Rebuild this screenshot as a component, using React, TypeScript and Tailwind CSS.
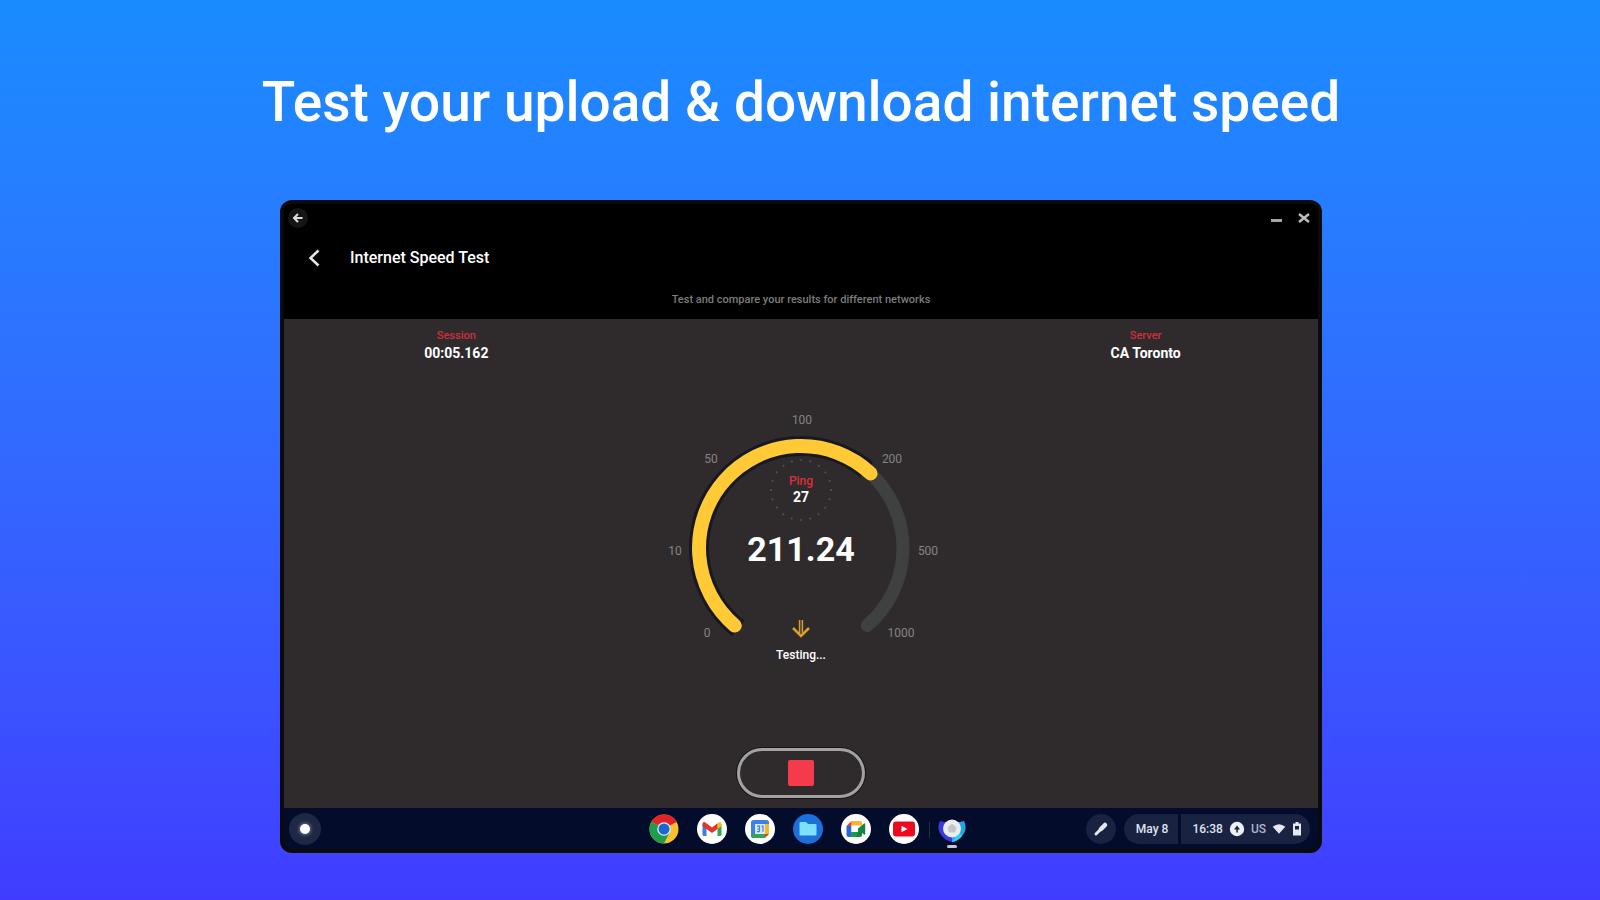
import type { ReactNode } from "react";

const CX = 160;
const CY = 160;
const R = 102;

function polar(angle: number, r: number): [number, number] {
  const a = (angle * Math.PI) / 180;
  return [CX + r * Math.sin(a), CY - r * Math.cos(a)];
}

function arc(from: number, to: number) {
  const [x1, y1] = polar(from, R);
  const [x2, y2] = polar(to, R);
  return `M ${x1} ${y1} A ${R} ${R} 0 ${to - from > 180 ? 1 : 0} 1 ${x2} ${y2}`;
}

const ticks = [
  { label: "0", x: 66, y: 245 },
  { label: "10", x: 34, y: 163 },
  { label: "50", x: 70, y: 71 },
  { label: "100", x: 161, y: 32 },
  { label: "200", x: 251, y: 71 },
  { label: "500", x: 287, y: 163 },
  { label: "1000", x: 260, y: 245 },
];

function Gauge() {
  return (
    <div className="relative mx-auto w-80">
      <svg viewBox="0 0 320 280" className="block w-full" role="img" aria-label="Download speed">
        <path d={arc(43, 139.5)} fill="none" stroke="#3f4040" strokeWidth="13" strokeLinecap="round" />
        <path d={arc(-142, 40)} fill="none" stroke="#0a0b22" strokeWidth="20" opacity="0.6" />
        <path d={arc(-139.5, 43)} fill="none" stroke="#ffca36" strokeWidth="14" strokeLinecap="round" />
        <circle cx={CX} cy="102" r="30" fill="none" stroke="#56535a" strokeWidth="2" strokeLinecap="round" strokeDasharray="0 9.42" />
        {ticks.map((t) => (
          <text
            key={t.label}
            x={t.x}
            y={t.y}
            dy="4"
            textAnchor="middle"
            className="fill-[#858384] font-['Roboto',sans-serif] text-[12px]"
          >
            {t.label}
          </text>
        ))}
      </svg>
      <div className="absolute inset-0 flex flex-col items-center pt-[85px] text-center">
        <div className="text-[12px] leading-4 font-medium text-[#d92f3d]">Ping</div>
        <div className="text-[14px] leading-4 font-bold">27</div>
        <div className="mt-6 text-[34px] leading-[40px] font-bold">211.24</div>
        <svg viewBox="0 0 20 20" className="mt-[50px] size-5" fill="none" stroke="#dba02c" aria-hidden="true">
          <path d="M8.600 1v13M11.400 1v13" strokeWidth="1.500" />
          <path d="M2 9l8 8 8-8" strokeWidth="2.500" />
        </svg>
        <div className="mt-2 text-[12px] leading-4 font-medium">Testing...</div>
      </div>
    </div>
  );
}

function ShelfApp({ label, children, className = "" }: { label: string; children: ReactNode; className?: string }) {
  return (
    <button type="button" aria-label={label} className={`flex size-[30px] items-center justify-center rounded-full ${className}`}>
      {children}
    </button>
  );
}

function Shelf() {
  return (
    <footer className="grid h-[41px] grid-cols-[1fr_auto_1fr] items-center rounded-b-lg bg-[#040c2b] pr-2 pl-[5px]">
      <button type="button" aria-label="Launcher" className="flex size-8 items-center justify-center rounded-full bg-[#1e2744]">
        <span className="size-[10px] rounded-full bg-white shadow-[0_0_4px_#9fb0d8]" />
      </button>
      <div className="flex items-center gap-[18px] pl-4">
        <ShelfApp label="Chrome">
          <svg viewBox="0 0 30 30" className="size-[30px]">
            <circle cx="15" cy="15" r="14.500" fill="#fbc02d" />
            <path d="M15 15 L2.440 7.750 A14.500 14.500 0 0 1 27.560 7.750 Z" fill="#e2232a" />
            <path d="M15 8.500 H27.900 L27.560 7.750 15 4 Z" fill="#e2232a" />
            <path d="M15 15 L2.440 7.750 A14.500 14.500 0 0 0 15 29.500 L20.600 18.200 Z" fill="#1f9d4d" />
            <circle cx="15" cy="15" r="6.800" fill="#dfe9f7" />
            <circle cx="15" cy="15" r="5.500" fill="#1967d2" />
          </svg>
        </ShelfApp>
        <ShelfApp label="Gmail" className="bg-white">
          <svg viewBox="0 0 20 16" className="h-4 w-5">
            <path d="M0.500 3v10.500q0 1.500 1.500 1.500h2.500V6z" fill="#3b7ded" />
            <path d="M19.500 3v10.500q0 1.500-1.500 1.500h-2.500V6z" fill="#2fa84f" />
            <path d="M15.500 2.500L17 1.200q2.500-.8 2.500 1.800v2l-4 3z" fill="#f9bb1a" />
            <path d="M.5 3Q.5.400 3 1.200L10 6.500l5.500-4.200V8L10 12 4.500 8 .5 5z" fill="#e33629" />
          </svg>
        </ShelfApp>
        <ShelfApp label="Calendar" className="bg-white">
          <svg viewBox="0 0 18 18" className="size-[18px]">
            <rect x="0" y="0" width="18" height="18" rx="2.500" fill="#3f7fe8" />
            <path d="M14 4h4v10h-4z" fill="#f9b81c" />
            <path d="M0 14h14v4H2.500Q0 18 0 15.500z" fill="#35a556" />
            <path d="M14 14h4l-4 4z" fill="#e5392e" />
            <path d="M18 14v4h-4z" fill="#fff" />
            <rect x="4" y="4" width="10" height="10" fill="#d8ebf4" />
            <path d="M6 6.200h2.500v5.500M6 9h2.500M6 11.700h2.500M10.500 6.200h1.500v5.500" fill="none" stroke="#3f7fe8" strokeWidth="1.200" />
          </svg>
        </ShelfApp>
        <ShelfApp label="Files" className="bg-[#1d6fdc]">
          <svg viewBox="0 0 18 16" className="h-4 w-[18px]">
            <path d="M1.500 1H7l2 2h7.500q1 0 1 1v9.500q0 1-1 1h-15q-1 0-1-1V2q0-1 1-1z" fill="#7fe0fb" />
          </svg>
        </ShelfApp>
        <ShelfApp label="Meet" className="bg-white">
          <svg viewBox="0 0 20 18" className="h-[18px] w-5">
            <path d="M5.500 1H14q2 0 2 2v2.500H5.500z" fill="#fbb32c" />
            <path d="M5.500 1v5H.5z" fill="#e8402f" />
            <path d="M.5 6h5v11H2.500q-2 0-2-2z" fill="#2367d8" />
            <path d="M5.500 12H12v5H4z" fill="#1a9a52" />
            <path d="M12 8.500l6-5q1.200-.6 1.200.8v9.400q0 1.400-1.200.8L16 12.900V15q0 2-2 2h-3z" fill="#14863f" />
            <rect x="5.500" y="5.500" width="6.500" height="6.500" fill="#fff" />
          </svg>
        </ShelfApp>
        <ShelfApp label="YouTube" className="bg-white">
          <svg viewBox="0 0 24 16" className="h-4 w-6">
            <rect x="1" y="0.500" width="22" height="15" rx="3" fill="#ee0a1e" />
            <path d="M9.500 4.800v6.400l6-3.200z" fill="#fff" />
          </svg>
        </ShelfApp>
        <div className="relative flex">
          <span className="absolute top-2 -left-2 h-4 w-px bg-[#252d4a]" />
          <ShelfApp label="Network Analyzer">
            <svg viewBox="0 0 30 30" className="size-[30px]">
              <path d="M3 7Q-1 15 5 22Q9 27 15 28V10z" fill="#3a3ae0" />
              <path d="M27 7Q31 15 25 22Q21 27 15 28V10z" fill="#1fa7e6" />
              <path d="M25 22Q21 27 15 28L22 17z" fill="#35cdf0" />
              <circle cx="15" cy="14.500" r="9" fill="#eceded" />
              <path d="M15 9.500l4.500 4-1.500 5h-6l-1.500-5z" fill="#c4c5c9" />
            </svg>
          </ShelfApp>
          <span className="absolute -bottom-1 left-[10px] h-[3px] w-[10px] rounded-full bg-[#c6cad8]" />
        </div>
      </div>
      <div className="flex items-center justify-end text-[12px] font-medium text-[#dfe3ee]">
        <button type="button" aria-label="Stylus tools" className="mr-2 flex size-[30px] items-center justify-center rounded-full bg-[#1a2242]">
          <svg viewBox="0 0 16 16" className="size-4" fill="none" stroke="#e4e8f0" strokeLinecap="round">
            <path d="M8 8L12 4" strokeWidth="4.500" />
            <path d="M3 13L8 8" strokeWidth="3" />
          </svg>
        </button>
        <button type="button" className="mr-[3px] h-[30px] rounded-l-full bg-[#1a2242] pr-[10px] pl-3">May 8</button>
        <button type="button" aria-label="Status tray" className="flex h-[30px] items-center gap-[6px] rounded-r-full bg-[#1a2242] pr-2 pl-[11px]">
          <span>16:38</span>
          <svg viewBox="0 0 16 16" className="size-4" aria-hidden="true">
            <circle cx="8" cy="8" r="7.200" fill="#eef1f6" />
            <path d="M8 4.500L11 8.500H8.800V11.500H7.300V8.500H5z" fill="#1a2242" />
          </svg>
          <span className="text-[#aeb4c6]">US</span>
          <svg viewBox="0 0 16 12" className="h-3 w-[14px]" aria-hidden="true">
            <path d="M8 11.500L.8 3.500Q8-2.500 15.200 3.500z" fill="#e4e8f0" />
          </svg>
          <svg viewBox="0 0 10 14" className="h-[14px] w-[10px]" aria-hidden="true">
            <path d="M3.500 0h3v1.500H9V13.500H1V1.500h2.500z" fill="#e4e8f0" />
            <rect x="3" y="4" width="4" height="3.500" fill="#1a2242" />
          </svg>
        </button>
      </div>
    </footer>
  );
}

function Stat({ label, value }: { label: string; value: string }) {
  return (
    <div className="text-center">
      <div className="text-[11px] leading-4 font-medium text-[#cf2f3c]">{label}</div>
      <div className="text-[14px] leading-[18px] font-bold">{value}</div>
    </div>
  );
}

export default function App() {
  return (
    <main className="min-h-screen bg-linear-to-b from-[#188cff] to-[#403cff] pb-12 pl-0.5 font-['Roboto',sans-serif] text-white">
      <h1 className="pt-[70px] text-center text-[55px] leading-[64px] font-medium">Test your upload &amp; download internet speed</h1>

      <section className="mx-auto mt-[66px] w-[1042px] max-w-full rounded-xl bg-[#0b0b0e] p-1">
        <header className="rounded-t-lg bg-black">
          <div className="flex items-center justify-between pt-1 pr-2 pl-1">
            <button type="button" aria-label="Back" className="flex size-5 items-center justify-center rounded-full bg-[#151515]">
              <svg viewBox="0 0 12 12" className="size-3" fill="none" stroke="#dedede" strokeWidth="2">
                <path d="M6 2L2 6l4 4M2 6h8.500" />
              </svg>
            </button>
            <div className="flex items-center gap-4">
              <button type="button" aria-label="Minimize" className="flex h-4 w-3 items-center justify-center pt-1">
                <span className="h-[3px] w-[11px] bg-[#a5a5a5]" />
              </button>
              <button type="button" aria-label="Close" className="flex size-3 items-center justify-center">
                <svg viewBox="0 0 12 12" className="size-3" fill="none" stroke="#bdbdbd" strokeWidth="2.500">
                  <path d="M1 2l10 8M11 2l-10 8" />
                </svg>
              </button>
            </div>
          </div>
          <div className="mt-[18px] flex items-center">
            <button type="button" aria-label="Navigate up" className="ml-[22px] flex h-6 w-4 items-center justify-center">
              <svg viewBox="0 0 12 18" className="h-[18px] w-3" fill="none" stroke="#e6e6e6" strokeWidth="2.500">
                <path d="M10.500 1.500L2.500 9l8 7.500" />
              </svg>
            </button>
            <h2 className="ml-7 text-[16px] leading-6 font-medium">Internet Speed Test</h2>
          </div>
          <p className="mt-[22px] pb-[11px] text-center text-[11px] leading-4 font-medium text-[#7c7c7c]">Test and compare your results for different networks</p>
        </header>

        <div className="bg-[#2f2b2c]">
          <div className="grid grid-cols-3 pt-[9px]">
            <Stat label="Session" value="00:05.162" />
            <span />
            <Stat label="Server" value="CA Toronto" />
          </div>
          <div className="mt-[26px]">
            <Gauge />
          </div>
          <div className="flex justify-center pt-[80px] pb-[10px]">
            <button type="button" aria-label="Stop test" className="flex h-[50px] w-32 items-center justify-center rounded-full border-[3px] border-[#a3a1a2] ring-1 ring-[#171416]">
              <span className="size-[26px] rounded-xs bg-[#f53b4b]" />
            </button>
          </div>
        </div>

        <Shelf />
      </section>
    </main>
  );
}
